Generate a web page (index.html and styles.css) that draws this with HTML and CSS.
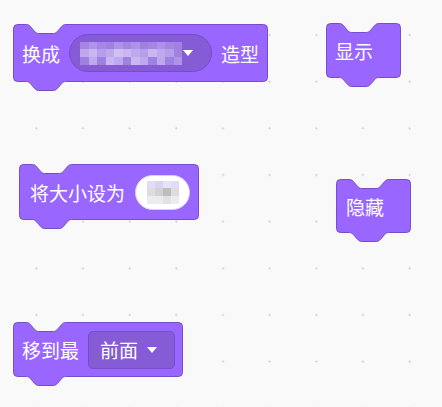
FILE: index.html
```html
<!DOCTYPE html>
<html lang="zh">
<head>
<meta charset="utf-8">
<link rel="stylesheet" href="styles.css">
</head>
<body>
<div class="canvas">

  <div class="block b1">
    <svg class="shape" width="256" height="69" viewBox="0 0 256 69">
      <path d="M0.5,4.5 A4,4 0 0 1 4.5,0.5 H13.5 c2,0 3,1 4,2.2 l4,4.6 c1,1 2,2.2 4,2.2 h15 c2,0 3,-1.2 4,-2.2 l4,-4.6 c1,-1 2,-2.2 4,-2.2 H250.5 a4,4 0 0 1 4,4 V53.5 a4,4 0 0 1 -4,4 H52.5 c-2,0 -3,1 -4,2.2 l-4,4.6 c-1,1 -2,2.2 -4,2.2 h-15 c-2,0 -3,-1.200 -4,-2.2 l-4,-4.6 c-1,-1 -2,-2.2 -4,-2.2 H4.5 a4,4 0 0 1 -4,-4 Z"/>
    </svg>
    <div class="row">
      <span class="label">换成</span>
      <div class="pill">
        <div class="mosaic m-costume">
          <i class="p1"></i><i class="p2"></i><i class="p1"></i><i class="p3"></i><i class="p2"></i><i class="p1"></i><i class="p2"></i><i class="p3"></i><i class="p1"></i><i class="p2"></i><i class="p1"></i><i class="p3"></i>
          <i class="p4"></i><i class="p5"></i><i class="p6"></i><i class="p4"></i><i class="p7"></i><i class="p5"></i><i class="p4"></i><i class="p6"></i><i class="p5"></i><i class="p4"></i><i class="p6"></i><i class="p3"></i>
          <i class="p3"></i><i class="p4"></i><i class="p3"></i><i class="p5"></i><i class="p4"></i><i class="p3"></i><i class="p5"></i><i class="p4"></i><i class="p3"></i><i class="p4"></i><i class="p3"></i><i class="p2"></i>
        </div>
        <span class="tri"></span>
      </div>
      <span class="label after">造型</span>
    </div>
  </div>

  <div class="block b2">
    <svg class="shape" width="76" height="66" viewBox="0 0 76 66">
      <path d="M0.5,4.5 A4,4 0 0 1 4.5,0.5 H13.5 c2,0 3,1 4,2.2 l4,4.6 c1,1 2,2.2 4,2.2 h15 c2,0 3,-1.2 4,-2.2 l4,-4.6 c1,-1 2,-2.2 4,-2.2 H70.5 a4,4 0 0 1 4,4 V50.5 a4,4 0 0 1 -4,4 H52.5 c-2,0 -3,1 -4,2.2 l-4,4.6 c-1,1 -2,2.2 -4,2.2 h-15 c-2,0 -3,-1.2 -4,-2.2 l-4,-4.6 c-1,-1 -2,-2.2 -4,-2.2 H4.5 a4,4 0 0 1 -4,-4 Z"/>
    </svg>
    <div class="row">
      <span class="label">显示</span>
    </div>
  </div>

  <div class="block b3">
    <svg class="shape" width="181" height="67" viewBox="0 0 181 67">
      <path d="M0.5,4.5 A4,4 0 0 1 4.5,0.5 H13.5 c2,0 3,1 4,2.2 l4,4.6 c1,1 2,2.2 4,2.2 h15 c2,0 3,-1.2 4,-2.2 l4,-4.6 c1,-1 2,-2.2 4,-2.2 H175.5 a4,4 0 0 1 4,4 V51.5 a4,4 0 0 1 -4,4 H52.5 c-2,0 -3,1 -4,2.2 l-4,4.6 c-1,1 -2,2.2 -4,2.2 h-15 c-2,0 -3,-1.2 -4,-2.2 l-4,-4.6 c-1,-1 -2,-2.2 -4,-2.2 H4.5 a4,4 0 0 1 -4,-4 Z"/>
    </svg>
    <div class="row">
      <span class="label">将大小设为</span>
      <div class="num">
        <div class="mosaic m-num">
          <i class="q1"></i><i class="q2"></i><i class="q3"></i><i class="q1"></i>
          <i class="q4"></i><i class="q5"></i><i class="q6"></i><i class="q4"></i>
          <i class="q7"></i><i class="q7"></i><i class="q8"></i><i class="q7"></i>
        </div>
      </div>
    </div>
  </div>

  <div class="block b4">
    <svg class="shape" width="76" height="65" viewBox="0 0 76 65">
      <path d="M0.5,4.5 A4,4 0 0 1 4.5,0.5 H13.5 c2,0 3,1 4,2.2 l4,4.6 c1,1 2,2.2 4,2.2 h15 c2,0 3,-1.2 4,-2.2 l4,-4.6 c1,-1 2,-2.2 4,-2.2 H70.5 a4,4 0 0 1 4,4 V49.5 a4,4 0 0 1 -4,4 H52.5 c-2,0 -3,1 -4,2.2 l-4,4.6 c-1,1 -2,2.2 -4,2.2 h-15 c-2,0 -3,-1.2 -4,-2.2 l-4,-4.6 c-1,-1 -2,-2.2 -4,-2.2 H4.5 a4,4 0 0 1 -4,-4 Z"/>
    </svg>
    <div class="row">
      <span class="label">隐藏</span>
    </div>
  </div>

  <div class="block b5">
    <svg class="shape" width="171" height="66" viewBox="0 0 171 66">
      <path d="M0.5,4.5 A4,4 0 0 1 4.5,0.5 H13.5 c2,0 3,1 4,2.2 l4,4.6 c1,1 2,2.2 4,2.2 h15 c2,0 3,-1.2 4,-2.2 l4,-4.6 c1,-1 2,-2.2 4,-2.2 H165.5 a4,4 0 0 1 4,4 V50.5 a4,4 0 0 1 -4,4 H52.5 c-2,0 -3,1 -4,2.2 l-4,4.6 c-1,1 -2,2.2 -4,2.2 h-15 c-2,0 -3,-1.2 -4,-2.2 l-4,-4.6 c-1,-1 -2,-2.2 -4,-2.2 H4.5 a4,4 0 0 1 -4,-4 Z"/>
    </svg>
    <div class="row">
      <span class="label">移到最</span>
      <div class="drop">
        <span class="drop-text">前面</span>
        <span class="tri"></span>
      </div>
    </div>
  </div>

</div>
</body>
</html>
```

FILE: styles.css
```css
html, body {
  margin: 0;
  padding: 0;
  background: #f9f9f9;
}

.canvas {
  position: relative;
  width: 442px;
  height: 407px;
  overflow: hidden;
  background-color: #f9f9f9;
  background-image: radial-gradient(circle at center, #d6d6d6 0, #d6d6d6 0.9px, rgba(214,214,214,0) 1.4px);
  background-size: 46.667px 46.667px;
  background-position: 13px 11.67px;
  font-family: "Noto Sans CJK SC", "Noto Sans", sans-serif;
}

.block {
  position: absolute;
}

.shape {
  position: absolute;
  left: 0;
  top: 0;
  overflow: visible;
}

.shape path {
  fill: #9966ff;
  stroke: #774dcb;
  stroke-width: 1;
}

.row {
  position: relative;
  display: flex;
  align-items: center;
  height: 100%;
}

.label {
  color: #ffffff;
  font-size: 19px;
  line-height: 1;
  white-space: nowrap;
}

/* block 1: switch costume */
.b1 { left: 13px; top: 24px; width: 255px; height: 58px; }
.b1 .row { padding-left: 9px; }
.b1 .pill {
  margin-left: 9px;
  width: 143px;
  height: 38px;
  box-sizing: border-box;
  border-radius: 19px;
  background: #855cd6;
  border: 1px solid #774dcb;
  display: flex;
  align-items: center;
  padding-left: 10px;
}
.b1 .after { margin-left: 9px; }

.mosaic {
  display: grid;
}
.mosaic i {
  display: block;
}
.m-costume {
  grid-template-columns: repeat(12, 8.5px);
  grid-template-rows: 7px 8px 8px;
  opacity: 0.95;
}
.p1 { background: #a888e6; }
.p2 { background: #b197ea; }
.p3 { background: #a283e2; }
.p4 { background: #c2adf0; }
.p5 { background: #cdbcf3; }
.p6 { background: #b9a2ec; }
.p7 { background: #d4c6f5; }

.tri {
  display: block;
  width: 0;
  height: 0;
  border-left: 5.5px solid transparent;
  border-right: 5.5px solid transparent;
  border-top: 6px solid #ffffff;
  margin-left: 1px;
}

/* block 2 / 4: show & hide */
.b2 { left: 326px; top: 23px; width: 75px; height: 55px; }
.b2 .row { padding-left: 9px; }
.b4 { left: 336px; top: 179px; width: 75px; height: 54px; }
.b4 .row { padding-left: 10px; }

/* block 3: set size */
.b3 { left: 19px; top: 164px; width: 180px; height: 56px; }
.b3 .row { padding-left: 11px; }
.b3 .num {
  margin-left: 10px;
  width: 55px;
  height: 35px;
  box-sizing: border-box;
  border-radius: 18px;
  background: #ffffff;
  border: 1px solid #d9d0ee;
  display: flex;
  align-items: center;
  justify-content: center;
}
.m-num {
  grid-template-columns: repeat(4, 8px);
  grid-template-rows: 7px 8px 8px;
}
.q1 { background: #e4dcf6; }
.q2 { background: #dcd2f3; }
.q3 { background: #e8e2f8; }
.q4 { background: #dddcdf; }
.q5 { background: #d2d2d4; }
.q6 { background: #bdbdc0; }
.q7 { background: #ecebee; }
.q8 { background: #e2e2e4; }

/* block 5: go to front */
.b5 { left: 13px; top: 322px; width: 170px; height: 55px; }
.b5 .row { padding-left: 9px; }
.b5 .drop {
  margin-left: 9px;
  width: 87px;
  height: 38px;
  box-sizing: border-box;
  border-radius: 5px;
  background: #855cd6;
  border: 1px solid #774dcb;
  display: flex;
  align-items: center;
}
.b5 .drop-text {
  color: #ffffff;
  font-size: 19px;
  line-height: 1;
  margin-left: 11px;
}
.b5 .drop .tri {
  margin-left: 9px;
}
```
